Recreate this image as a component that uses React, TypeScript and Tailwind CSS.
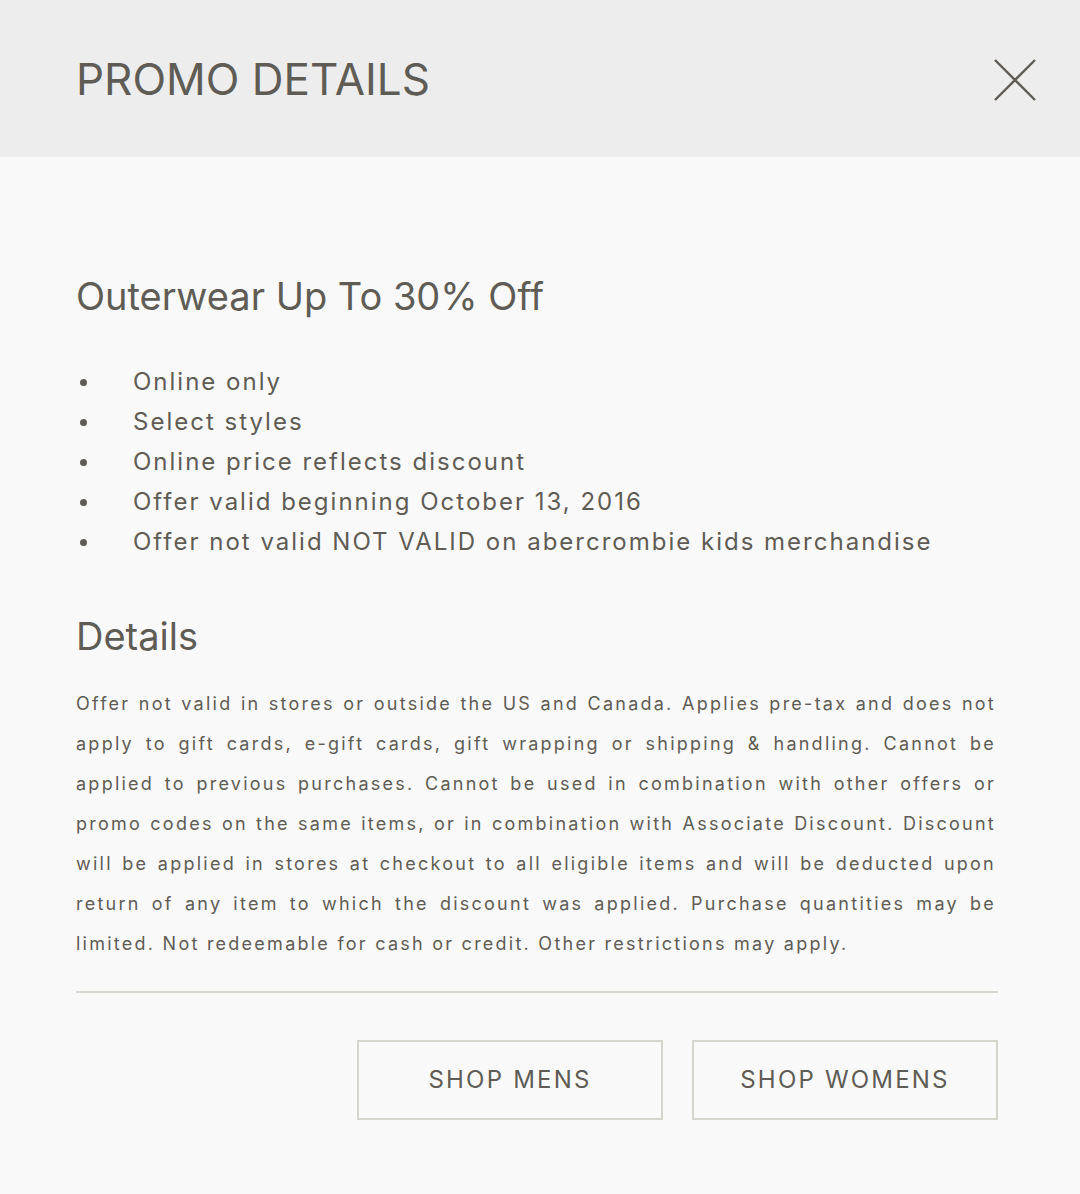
import React from 'react'

const bullets = [
  'Online only',
  'Select styles',
  'Online price reflects discount',
  'Offer valid beginning October 13, 2016',
  'Offer not valid NOT VALID on abercrombie kids merchandise',
]

const details =
  'Offer not valid in stores or outside the US and Canada. Applies pre-tax and does not apply to gift cards, e-gift cards, gift wrapping or shipping & handling. Cannot be applied to previous purchases. Cannot be used in combination with other offers or promo codes on the same items, or in combination with Associate Discount. Discount will be applied in stores at checkout to all eligible items and will be deducted upon return of any item to which the discount was applied. Purchase quantities may be limited. Not redeemable for cash or credit. Other restrictions may apply.'

export default function App() {
  return (
    <div className="min-h-[1194px] w-[1080px] bg-[#f9f9f9] text-[#5f5c55] font-['Inter',sans-serif]">
      {/* header */}
      <div className="h-[157px] bg-[#ededed] flex items-center justify-between pl-[76px] pr-[44px]">
        <h1 className="text-[44px] leading-none">PROMO DETAILS</h1>
        <button className="w-[42px] h-[42px] flex items-center justify-center mt-[2px]" aria-label="Close">
          <svg width="42" height="42" viewBox="0 0 42 42" fill="none" stroke="#5f5c55" strokeWidth="2.4">
            <path d="M1 1 L41 41 M41 1 L1 41" />
          </svg>
        </button>
      </div>

      <div className="px-[76px] pt-[116px]">
        <h2 className="text-[38px] leading-[46px]">Outerwear Up To 30% Off</h2>

        <ul className="mt-[43px] text-[24px] leading-[40px] tracking-[2px]">
          {bullets.map(b => (
            <li key={b} className="flex items-center">
              <span className="w-[57px] flex pl-[4px]">
                <span className="w-[7px] h-[7px] rounded-full bg-[#5f5c55]" />
              </span>
              <span>{b}</span>
            </li>
          ))}
        </ul>

        <h2 className="mt-[52px] text-[38px] leading-[45px]">Details</h2>

        <p className="mt-[25px] w-[920px] text-[18px] leading-[40px] tracking-[2.25px] text-justify">
          {details}
        </p>

        <div className="mt-[27px] w-[922px] h-[2px] bg-[#d7d7cf]" />

        <div className="mt-[47px] w-[922px] flex justify-end gap-[29px]">
          <button className="w-[306px] h-[80px] border-2 border-[#d6d6ce] text-[24px] tracking-[2.2px]">
            SHOP MENS
          </button>
          <button className="w-[306px] h-[80px] border-2 border-[#d6d6ce] text-[24px] tracking-[2.2px]">
            SHOP WOMENS
          </button>
        </div>
      </div>
    </div>
  )
}
